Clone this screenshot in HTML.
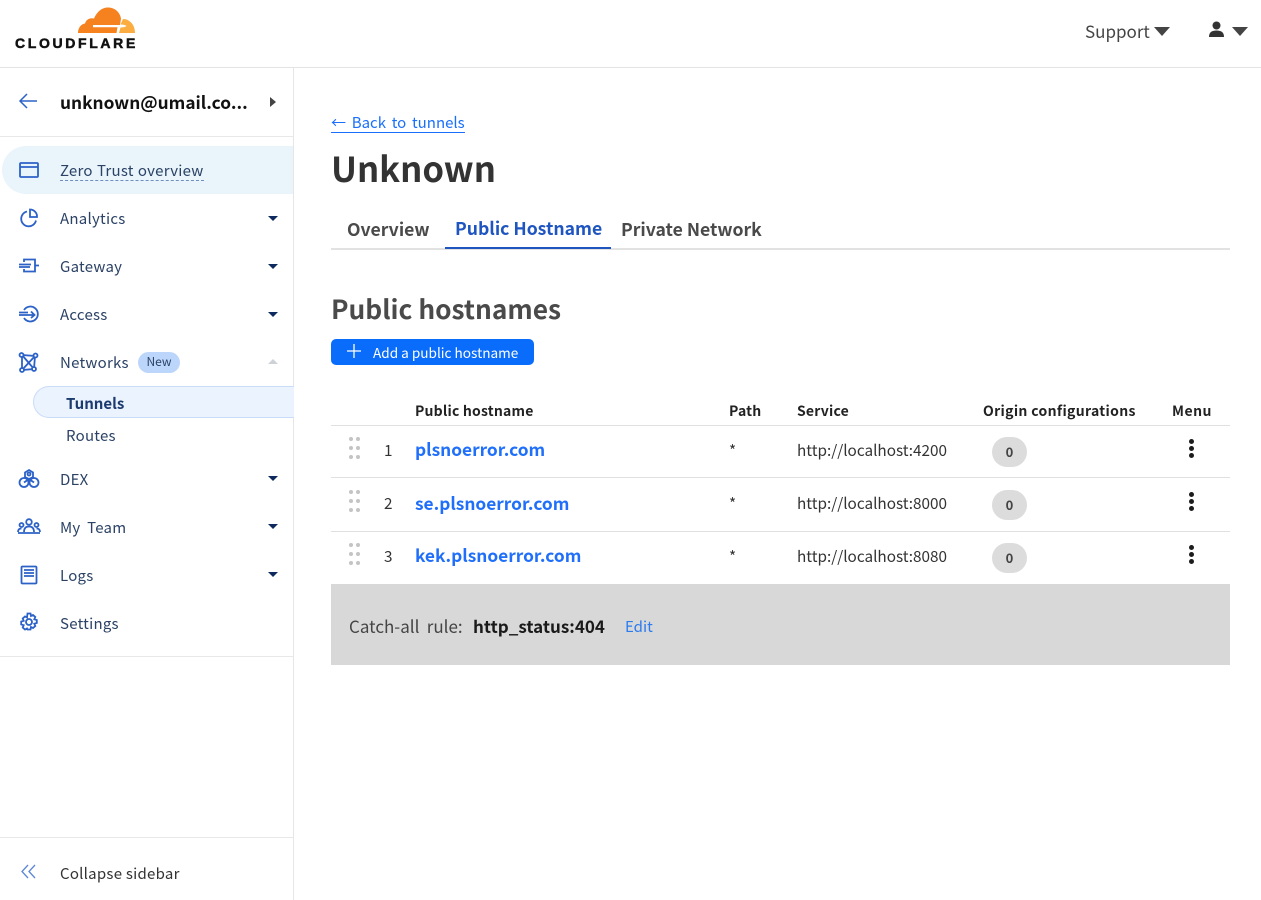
<!DOCTYPE html>
<html lang="en"><head><meta charset="utf-8"><title>Unknown</title>
<style>
html,body{margin:0;padding:0;background:#fff;width:1261px;height:900px;overflow:hidden}
body{font-family:"Noto Sans CJK KR","Liberation Sans",sans-serif;position:relative;color:#36393a}
.t{position:absolute;white-space:nowrap;line-height:20px;font-size:15px}
.r{position:absolute}
.nav{color:#2b4266;left:60px;letter-spacing:.25px}
.b{font-weight:700}
.link{color:#1a6ffb}
.h{font-size:14px;font-weight:700;color:#222;top:400.500px;letter-spacing:.2px}
.c{font-size:15.3px;color:#333}
.host{font-size:17.3px;font-weight:700;color:#1f6ffa}
svg.ic{position:absolute;fill:none;stroke:#2c62c8;stroke-width:1.8}
.car{position:absolute;left:268px;width:0;height:0;border-left:5px solid transparent;border-right:5px solid transparent;border-top:5px solid #0d2a5e}
.dots{position:absolute;left:349px;width:12px;height:24px}
.dots i{position:absolute;width:4px;height:4px;border-radius:50%;background:#c4c4c4}
.pill{position:absolute;left:992px;width:35px;height:30px;border-radius:15px;background:#dcdcdc;text-align:center;font-size:13px;font-weight:700;line-height:30px;color:#444}
.kebab{position:absolute;left:1189px;width:5px}
.kebab i{display:block;width:5px;height:5px;border-radius:50%;background:#1c1c1c;margin-bottom:2px}
</style></head><body>
<!-- header -->
<div class="r" style="left:0;top:67px;width:1261px;height:1px;background:#e4e4e4"></div>
<svg class="r" style="left:0;top:0" width="150" height="40" viewBox="0 0 150 40">
<path fill="#f6821f" d="M78 33c0-5 3-9 7-9.500 1-4 5-6 9-5 3-7 8-11 14-11 7 0 12 5 13 11l-1 6.500H93v2.300h24.500l-1 5.700z"/>
<path fill="#fbad41" d="M123 19c7 0 12 6 12 14h-16l1.500-5.500c3 0 5-.5 6-1.500-1-1-4-1.500-6-1.500z"/>
</svg>
<div class="t" style="left:15px;top:33px;font-size:14px;font-weight:900;letter-spacing:2.650px;color:#111;font-family:'Liberation Sans',sans-serif;-webkit-text-stroke:.5px #111">CLOUDFLARE</div>
<div class="t" style="left:1085px;top:21px;font-size:17px;color:#444">Support</div>
<div class="r" style="left:1154px;top:27px;border-left:8px solid transparent;border-right:8px solid transparent;border-top:9px solid #444"></div>
<svg class="r" style="left:1208px;top:21px" width="17" height="17" viewBox="0 0 17 17" fill="#333"><circle cx="8.500" cy="4.500" r="4"/><path d="M1 16c0-5 3-6.500 7.500-6.500S16 11 16 16z"/></svg>
<div class="r" style="left:1232px;top:27px;border-left:8px solid transparent;border-right:8px solid transparent;border-top:9px solid #444"></div>
<!-- sidebar -->
<div class="r" style="left:293px;top:68px;width:1px;height:832px;background:#e6e6e6"></div>
<div class="r" style="left:0;top:136px;width:293px;height:1px;background:#e8e8e8"></div>
<div class="r" style="left:0;top:656px;width:293px;height:1px;background:#e8e8e8"></div>
<div class="r" style="left:0;top:837px;width:293px;height:1px;background:#e8e8e8"></div>
<svg class="ic" style="left:18px;top:92px;stroke-width:1.500" width="20" height="18" viewBox="0 0 20 18"><path d="M19 9H2M9 2 2 9l7 7"/></svg>
<div class="t b" style="left:60px;top:92px;font-size:17.300px;color:#111">unknown@umail.co...</div>
<div class="r" style="left:270px;top:97px;border-top:5px solid transparent;border-bottom:5px solid transparent;border-left:6px solid #444"></div>
<div class="r" style="left:2px;top:146px;width:291px;height:48px;background:#e9f5fb;border-radius:24px 0 0 24px"></div>
<svg class="ic" style="left:19px;top:161px" width="20" height="18" viewBox="0 0 20 18"><rect x="1" y="2" width="18" height="14" rx="1"/><path d="M1 6h18"/></svg>
<div class="t nav" style="top:162px;border-bottom:1px dashed #6f8fc0;line-height:18px;word-spacing:.6px">Zero Trust overview</div>
<svg class="ic" style="left:19px;top:208px" width="20" height="20" viewBox="0 0 20 20"><path d="M8 3.500a7.500 7.500 0 1 0 9 9M11 1.500a7 7 0 0 1 7 7.500h-7z"/></svg>
<div class="t nav" style="top:209px">Analytics</div><div class="car" style="top:216px"></div>
<svg class="ic" style="left:18px;top:256px" width="22" height="20" viewBox="0 0 22 20"><path d="M6 6V3.500h11v12H6V13M1 8.500h12M1 11h11M17 9.500h4"/></svg>
<div class="t nav" style="top:257px">Gateway</div><div class="car" style="top:264px"></div>
<svg class="ic" style="left:18px;top:304px" width="22" height="20" viewBox="0 0 22 20"><path d="M6 6a7.500 7.500 0 1 1 0 8M1 8.500h9M1 11h15M13 7.500l3.500 3.500-3.500 3"/></svg>
<div class="t nav" style="top:305px">Access</div><div class="car" style="top:312px"></div>
<svg class="ic" style="left:18px;top:352px" width="21" height="21" viewBox="0 0 21 21"><path d="M4 3l13 1-1 13-12 1zM4 3l12 14M17 4 4 18M4 3l6.500 7.500"/><g fill="#fff"><circle cx="3.500" cy="3" r="2"/><circle cx="17.500" cy="3.500" r="2"/><circle cx="16" cy="17" r="2"/><circle cx="4" cy="18" r="2"/></g></svg>
<div class="t nav" style="top:353px">Networks</div>
<div class="r" style="left:138px;top:352px;width:42px;height:21px;border-radius:11px;background:#bcd6fb;text-align:center;font-size:12px;line-height:20px;color:#2b4266">New</div>
<div class="r" style="left:268px;top:359px;border-left:5px solid transparent;border-right:5px solid transparent;border-bottom:5px solid #cdd2d8"></div>
<div class="r" style="left:33px;top:386px;width:260px;height:30px;background:#eaf3fe;border:1px solid #c9dcf8;border-right:0;border-radius:16px 0 0 16px"></div>
<div class="t b" style="left:66px;top:394px;color:#1b3a6d">Tunnels</div>
<div class="t nav" style="left:66px;top:426px">Routes</div>
<svg class="ic" style="left:18px;top:468px" width="22" height="21" viewBox="0 0 22 21"><path d="M11 2 15 4.500V9L11 11 7 9V4.500z"/><circle cx="11" cy="6" r="1.500"/><circle cx="6" cy="14.500" r="4.500"/><circle cx="16" cy="14.500" r="4.500"/><path d="M6 14.500l5-3.500 5 3.500"/></svg>
<div class="t nav" style="top:470px">DEX</div><div class="car" style="top:476px"></div>
<svg class="ic" style="left:17px;top:518px" width="24" height="18" viewBox="0 0 24 18"><circle cx="12" cy="4" r="2.800"/><circle cx="4.500" cy="7" r="2"/><circle cx="19.500" cy="7" r="2"/><path d="M1 14c0-3 2-3.500 3.500-3.500M23 14c0-3-2-3.500-3.500-3.500M7 14c0-4 2-5.500 5-5.500s5 1.500 5 5.500M1 15h22"/></svg>
<div class="t nav" style="top:518px;word-spacing:3px">My Team</div><div class="car" style="top:524px"></div>
<svg class="ic" style="left:20px;top:565px" width="18" height="20" viewBox="0 0 18 20"><rect x="1.500" y="1.500" width="15" height="17" rx="1"/><path d="M4 5h10M4 8h10M4 11h10"/></svg>
<div class="t nav" style="top:566px">Logs</div><div class="car" style="top:572px"></div>
<svg class="ic" style="left:19px;top:612px" width="20" height="20" viewBox="0 0 20 20"><circle cx="10" cy="10" r="3"/><path d="M8.500 1.500h3l.5 2.500 2-1 2.300 2-1 2.300 2.500.7v3l-2.500.7 1 2.300-2.300 2-2-1-.5 2.500h-3L8 16.500l-2 1-2.300-2 1-2.300-2.500-.7v-3l2.500-.7-1-2.300 2.300-2 2 1z"/></svg>
<div class="t nav" style="top:614px">Settings</div>
<svg class="ic" style="left:21px;top:864px;stroke:#5c86d6;stroke-width:1.300" width="15" height="15" viewBox="0 0 15 15"><path d="M7 1 1 7.500 7 14M14 1 8 7.500 14 14"/></svg>
<div class="t" style="left:60px;top:864px;color:#333;letter-spacing:.25px">Collapse sidebar</div>
<!-- main -->
<div class="t link" style="left:331px;top:113px;border-bottom:1px solid #1a6ffb;line-height:19px;word-spacing:2.400px">← Back to tunnels</div>
<div class="t b" style="left:331px;top:143.500px;font-size:34.700px;line-height:46px;color:#333">Unknown</div>
<div class="r" style="left:331px;top:248px;width:899px;height:2px;background:#e2e2e2"></div>
<div class="r" style="left:445px;top:247px;width:166px;height:2px;background:#1f55c0"></div>
<div class="t b" style="left:347px;top:220px;font-size:17.600px;color:#4a4a4a">Overview</div>
<div class="t b" style="left:455px;top:219px;font-size:17.600px;color:#1f55c0">Public Hostname</div>
<div class="t b" style="left:621px;top:220px;font-size:17.600px;color:#4a4a4a">Private Network</div>
<div class="t b" style="left:331px;top:290px;font-size:26.300px;line-height:36px;color:#4a4a4a">Public hostnames</div>
<div class="r" style="left:331px;top:339px;width:203px;height:26px;border-radius:5px;background:#0a6cfb"></div>
<svg class="r" style="left:347px;top:344px" width="14" height="14" viewBox="0 0 14 14" stroke="#fff" stroke-width="1.300"><path d="M7 0v14M0 7h14"/></svg>
<div class="t" style="left:373px;top:342px;font-size:13.600px;color:#fff">Add a public hostname</div>
<div class="t h" style="left:415px">Public hostname</div>
<div class="t h" style="left:729px">Path</div>
<div class="t h" style="left:797px">Service</div>
<div class="t h" style="left:983px;letter-spacing:.33px">Origin configurations</div>
<div class="t h" style="left:1172px;letter-spacing:.5px">Menu</div>
<div class="r" style="left:331px;top:425px;width:899px;height:1px;background:#e0e0e0"></div>
<div class="r" style="left:331px;top:477px;width:899px;height:1px;background:#e0e0e0"></div>
<div class="r" style="left:331px;top:531px;width:899px;height:1px;background:#e0e0e0"></div>
<div class="dots" style="top:437px"><i style="left:0;top:0"></i><i style="left:7px;top:0"></i><i style="left:0;top:9px"></i><i style="left:7px;top:9px"></i><i style="left:0;top:18px"></i><i style="left:7px;top:18px"></i></div>
<div class="dots" style="top:490px"><i style="left:0;top:0"></i><i style="left:7px;top:0"></i><i style="left:0;top:9px"></i><i style="left:7px;top:9px"></i><i style="left:0;top:18px"></i><i style="left:7px;top:18px"></i></div>
<div class="dots" style="top:543px"><i style="left:0;top:0"></i><i style="left:7px;top:0"></i><i style="left:0;top:9px"></i><i style="left:7px;top:9px"></i><i style="left:0;top:18px"></i><i style="left:7px;top:18px"></i></div>
<div class="t c" style="left:384px;top:440px">1</div><div class="t c" style="left:384px;top:493px">2</div><div class="t c" style="left:384px;top:546px">3</div>
<div class="t host" style="left:415px;top:439px">plsnoerror.com</div>
<div class="t host" style="left:415px;top:493px">se.plsnoerror.com</div>
<div class="t host" style="left:415px;top:545px">kek.plsnoerror.com</div>
<div class="t c" style="left:729px;top:440px">*</div><div class="t c" style="left:729px;top:493px">*</div><div class="t c" style="left:729px;top:546px">*</div>
<div class="t c" style="left:797px;top:440px">http://localhost:4200</div>
<div class="t c" style="left:797px;top:493px">http://localhost:8000</div>
<div class="t c" style="left:797px;top:546px">http://localhost:8080</div>
<div class="pill" style="top:437px">0</div><div class="pill" style="top:490px">0</div><div class="pill" style="top:543px">0</div>
<div class="kebab" style="top:439px"><i></i><i></i><i></i></div>
<div class="kebab" style="top:492px"><i></i><i></i><i></i></div>
<div class="kebab" style="top:545px"><i></i><i></i><i></i></div>
<div class="r" style="left:331px;top:584px;width:899px;height:81px;background:#d8d8d8"></div>
<div class="t" style="left:349px;top:616px;font-size:17px;color:#444;word-spacing:3.500px">Catch-all rule:</div>
<div class="t b" style="left:473px;top:616px;font-size:17px;color:#1a1a1a">http_status:404</div>
<div class="t" style="left:625px;top:617px;font-size:15px;color:#2a7af0">Edit</div>
</body></html>
